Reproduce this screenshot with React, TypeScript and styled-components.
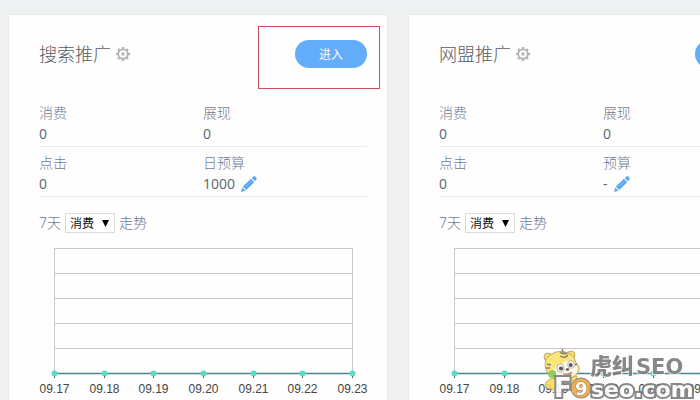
import React, { useId } from 'react';
import styled, { createGlobalStyle } from 'styled-components';

const GlobalStyle = createGlobalStyle`
  * { box-sizing: border-box; }
  body {
    margin: 0;
    overflow: hidden;
    background: #eef0f1;
    color: #666b75;
    font: 14px/20px "Noto Sans", "Noto Sans CJK SC", sans-serif;
  }
`;

const Board = styled.main`
  display: flex;
  gap: 20px;
  min-height: 100vh;
  padding: 14px 8px 0;
`;

const Card = styled.section`
  flex: 0 0 380px;
  min-width: 0;
  padding: 25px 20px 0 30px;
  background: #fefefe;
  border: 1px solid #e6e9ea;
`;

const CardHeader = styled.header`
  display: flex;
  align-items: center;
  justify-content: space-between;
  height: 28px;
  margin-bottom: 29px;
`;

const Heading = styled.div`
  display: flex;
  align-items: center;
  gap: 5px;
`;

const Title = styled.h2`
  margin: 0;
  font-size: 18px;
  line-height: 28px;
  font-weight: 300;
  color: #555b63;
`;

const IconButton = styled.button`
  display: flex;
  padding: 0;
  border: 0;
  background: none;
  cursor: pointer;
`;

const EnterWrap = styled.div`
  position: relative;
`;

const EnterButton = styled.button`
  display: block;
  width: 72px;
  height: 28px;
  padding: 0;
  border: 0;
  border-radius: 14px;
  background: #64adfa;
  color: #fff;
  font: 12px/28px "Noto Sans CJK SC", sans-serif;
  cursor: pointer;
`;

const Highlight = styled.span`
  position: absolute;
  top: -14px;
  right: -13px;
  bottom: -21px;
  left: -37px;
  border: 1px solid #c9515b;
  pointer-events: none;
`;

const Metrics = styled.dl`
  display: grid;
  grid-template-columns: 1fr 1fr;
  margin: 0 0 15px;
`;

const Metric = styled.div`
  height: 50px;
  padding-top: 6px;
  border-bottom: 1px solid #e8eaec;
`;

const MetricLabel = styled.dt`
  font-weight: 300;
  color: #727b8e;
  line-height: 20px;
`;

const MetricValue = styled.dd`
  display: flex;
  align-items: center;
  gap: 6px;
  margin: 0;
  line-height: 22px;
`;

const TrendBar = styled.div`
  display: flex;
  align-items: center;
  gap: 4px;
  height: 22px;
  margin-bottom: 12px;
  font-weight: 300;
  color: #727b8e;
`;

const SelectWrap = styled.span`
  display: grid;
  align-items: center;
  width: 50px;

  > * { grid-area: 1 / 1; }
  > svg { justify-self: end; margin-right: 6px; pointer-events: none; }
`;

const Select = styled.select`
  appearance: none;
  width: 100%;
  height: 20px;
  padding: 0 4px;
  border: 1px solid #dcdcd4;
  border-radius: 0;
  background: #fff;
  color: #111;
  font: 12px/18px "Noto Sans CJK SC", sans-serif;
`;

const Chart = styled.svg`
  display: block;
  width: 100%;
  overflow: visible;
  font: 12px "Liberation Sans", Arial, sans-serif;
  fill: #444;
`;

const Watermark = styled.svg`
  position: fixed;
  right: 0;
  bottom: 0;
  width: 160px;
  height: 54px;
  opacity: 0.9;
  pointer-events: none;
`;

function GearIcon() {
  return (
    <svg width="14" height="14" viewBox="0 0 14 14" fill="none" stroke="#b3b5b7">
      <circle cx="7" cy="7" r="4.7" strokeWidth="1.8" />
      <circle cx="7" cy="7" r="1.8" fill="#b3b5b7" stroke="none" />
      <path
        strokeWidth="2.4"
        d="M7 0v2M7 12v2M0 7h2M12 7h2M2 2l1.4 1.4M10.6 10.6L12 12M2 12l1.4-1.4M10.6 3.4L12 2"
      />
    </svg>
  );
}

function PencilIcon() {
  return (
    <svg width="16" height="16" viewBox="0 0 16 16" fill="#5ba7f5">
      <path d="M0 16l1.2-4.6L4.6 14.8zM1.8 10.6L10 2.8l3.2 3.4-8 7.9zM10.8 2l1.6-1.5q.9-.8 1.8 0l1.1 1.2q.8.9 0 1.8L14 5.3z" />
      <path d="M4 11.4L10.5 5.2" fill="none" stroke="#8cc3fa" strokeWidth=".7" />
    </svg>
  );
}

const days = ['09.17', '09.18', '09.19', '09.20', '09.21', '09.22', '09.23'];
const gridRows = [0, 25, 50, 75, 100];
const dayX = (i: number) => 15.5 + Math.round((i * 298) / 6);

function TrendChart() {
  return (
    <Chart viewBox="0 0 328 160" role="img" aria-label="7天消费走势">
      <g fill="none" stroke="#c7c8ca">
        {gridRows.map((y) => (
          <path key={y} d={`M15 ${y + 2.5}H314`} />
        ))}
        <path d="M15.5 2V127M313.5 2V127" />
      </g>
      {days.map((day, i) => (
        <path key={day} d={`M${dayX(i)} 127v5`} stroke="#444" />
      ))}
      <path d="M15 127.5H314" stroke="#4e8390" strokeWidth="1.5" />
      {days.map((day, i) => (
        <g key={day}>
          <circle cx={dayX(i)} cy="127.5" r="3" fill="#5cdcc4" />
          <text x={dayX(i)} y="147" textAnchor="middle">{day}</text>
        </g>
      ))}
    </Chart>
  );
}

interface Campaign {
  title: string;
  budgetLabel: string;
  budget: string;
  highlighted?: boolean;
}

function CampaignCard({ title, budgetLabel, budget, highlighted }: Campaign) {
  const selectId = useId();
  return (
    <Card>
      <CardHeader>
        <Heading>
          <Title>{title}</Title>
          <IconButton type="button" aria-label="设置"><GearIcon /></IconButton>
        </Heading>
        <EnterWrap>
          <EnterButton type="button">进入</EnterButton>
          {highlighted && <Highlight />}
        </EnterWrap>
      </CardHeader>
      <Metrics>
        <Metric><MetricLabel>消费</MetricLabel><MetricValue>0</MetricValue></Metric>
        <Metric><MetricLabel>展现</MetricLabel><MetricValue>0</MetricValue></Metric>
        <Metric><MetricLabel>点击</MetricLabel><MetricValue>0</MetricValue></Metric>
        <Metric>
          <MetricLabel>{budgetLabel}</MetricLabel>
          <MetricValue>
            {budget}
            <IconButton type="button" aria-label="修改预算"><PencilIcon /></IconButton>
          </MetricValue>
        </Metric>
      </Metrics>
      <TrendBar>
        <label htmlFor={selectId}>7天</label>
        <SelectWrap>
          <Select id={selectId} defaultValue="消费">
            <option>消费</option>
            <option>展现</option>
            <option>点击</option>
          </Select>
          <svg width="7" height="7" viewBox="0 0 7 7"><path d="M0 0h7L3.5 7z" fill="#000" /></svg>
        </SelectWrap>
        <span>走势</span>
      </TrendBar>
      <TrendChart />
    </Card>
  );
}

function SiteMark() {
  return (
    <Watermark viewBox="0 0 160 54" role="img" aria-label="虎纠SEO F9seo.com">
      <g stroke="#a8925a" strokeWidth=".8">
        <path d="M10 33Q3 37 6 42L14 44 36 40 37 30z" fill="#f6dc5a" />
        <circle cx="8" cy="11" r="4" fill="#f6d95c" />
        <circle cx="31" cy="9" r="4" fill="#f6d95c" />
        <path d="M6 23Q3 14 10 9Q18 3 28 7Q35 10 36 17Q42 22 37 28Q30 35 19 34Q8 32 6 23z" fill="#fae46c" />
      </g>
      <path d="M14 24Q16 18 21 19Q28 12 34 17Q40 22 36 28Q30 33 22 33Q14 31 14 24z" fill="#fffbea" />
      <g fill="#fff" stroke="#777" strokeWidth=".6">
        <ellipse cx="20.5" cy="22" rx="3.7" ry="4" />
        <ellipse cx="31" cy="18.5" rx="3.4" ry="3.8" />
      </g>
      <g fill="#444">
        <circle cx="21" cy="22.5" r="2.1" />
        <circle cx="30.7" cy="19" r="2" />
        <ellipse cx="27.5" cy="23.5" rx="1.8" ry="1.2" />
      </g>
      <path d="M20 6q3 3 7 1M20 10q5 3 8-1M22 3l2 5M7 18l4 1M6 22l4 0M37 18l-2 1" fill="none" stroke="#77725f" strokeWidth="1.4" />
      <path d="M23 27q5 2 9-2q0 5-4 5.500t-5-3.500" fill="#df7c68" />
      <circle cx="12" cy="28" r="4" fill="#8fcf4b" />
      <g fill="#7c7c7c" stroke="#fff" strokeWidth="1.5" paintOrder="stroke" fontWeight="900">
        <text x="50" y="28" fontSize="22" fontFamily="'Noto Sans CJK SC', sans-serif">虎纠</text>
        <text x="96" y="28" fontSize="21" fontFamily="'DejaVu Sans', sans-serif">SEO</text>
      </g>
      <g fontFamily="'DejaVu Sans', sans-serif" fontWeight="bold" paintOrder="stroke">
        <text x="14" y="51" fontSize="26" fill="#fff" stroke="#7c7c7c" strokeWidth="4">F</text>
        <text x="51" y="51" fontSize="22" fill="#fff" stroke="#7c7c7c" strokeWidth="4">seo.com</text>
        <circle cx="41" cy="42" r="9.500" fill="#eda840" stroke="#7c7c7c" strokeWidth="2" />
        <text x="35" y="49" fontSize="18" fill="#fff" stroke="#956f3d" strokeWidth="1">9</text>
      </g>
    </Watermark>
  );
}

export default function App() {
  return (
    <>
      <GlobalStyle />
      <Board>
        <CampaignCard title="搜索推广" budgetLabel="日预算" budget="1000" highlighted />
        <CampaignCard title="网盟推广" budgetLabel="预算" budget="-" />
      </Board>
      <SiteMark />
    </>
  );
}
